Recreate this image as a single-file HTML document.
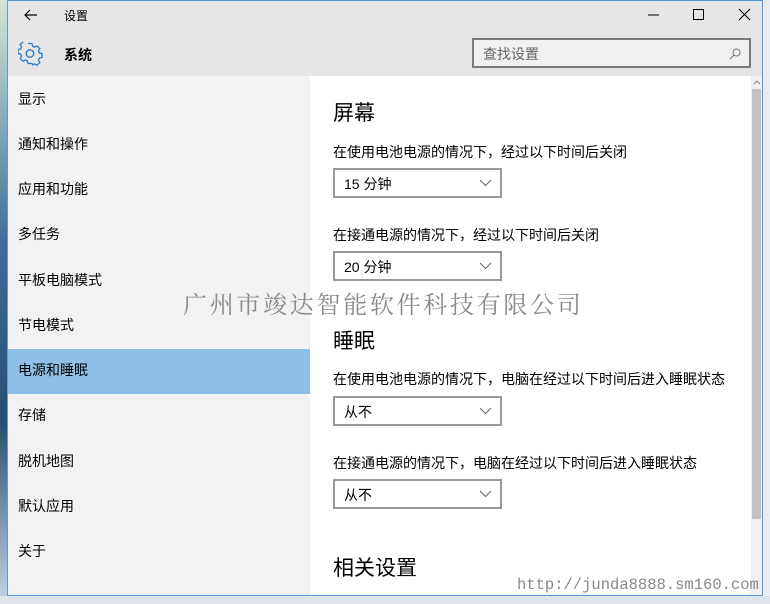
<!DOCTYPE html>
<html><head><meta charset="utf-8"><style>
*{margin:0;padding:0;box-sizing:border-box}
body{width:770px;height:604px;overflow:hidden;background:#e9edf2;font-family:"Liberation Sans","Noto Sans CJK SC",sans-serif;position:relative;color:#000}
.strip{position:absolute;left:0;top:0;width:8px;height:604px;background:linear-gradient(#d8e6d0,#3d6e9a 40%,#2b4d70 70%,#c9d4e0)}
.win{position:absolute;left:7px;top:0;width:756px;height:596px;border:1px solid #5a9ad6;background:#fff;overflow:hidden}
.title{position:absolute;left:0;top:0;width:756px;height:75px;background:#e6e6e6}
.t{position:absolute;font-size:12px}
.side{position:absolute;left:0;top:75px;width:302px;height:521px;background:#f2f2f2}
.item{position:absolute;left:10px;font-size:14px}
.sel{position:absolute;left:0;top:273px;width:302px;height:45px;background:#8fbfe6}
.c{position:absolute;font-size:14px}
.h{position:absolute;font-size:21px}
.dd{position:absolute;left:325px;width:169px;height:30px;border:2px solid #999;background:#fff;font-size:14px;padding:4px 0 0 9px}
.dd svg{position:absolute;right:8px;top:9px}
.search{position:absolute;left:464px;top:37px;width:279px;height:30px;border:2px solid #7a7a7a;background:#f0f0f0;font-size:14px;color:#666;padding:4px 0 0 9px}
.sb{position:absolute;left:743px;top:75px;width:11px;height:521px;background:#f0f0f0}
.thumb{position:absolute;left:744px;top:88px;width:9px;height:430px;background:#c2c2c2}
.wm{position:absolute;left:183px;top:285px;font-family:"Noto Serif CJK SC",serif;font-size:24px;color:#8a8a8a;letter-spacing:2.7px;white-space:nowrap}
.url{position:absolute;left:517px;top:576px;font-family:"Liberation Mono",monospace;font-size:15.5px;color:#888;white-space:nowrap}
.bot{position:absolute;left:0;top:596px;width:770px;height:8px;background:#dfe4ea}
</style></head><body>
<div class="strip"></div>
<div class="bot"></div>
<div class="win">
<div class="title">
<svg style="position:absolute;left:16px;top:7px" width="14" height="14" viewBox="0 0 14 14"><path d="M13 7H1M6 2L1 7l5 5" stroke="#000" stroke-width="1.2" fill="none"/></svg>
<div class="t" style="left:56px;top:6px">设置</div>
<svg style="position:absolute;left:10px;top:40px" width="25" height="25" viewBox="0 0 24 24"><path d="M10 2h4l.6 2.7 2 1 2.4-1.4 2.8 2.8-1.4 2.4 1 2 2.6.5v4l-2.6.6-1 2 1.4 2.4-2.8 2.8-2.4-1.4-2 1L14 22h-4l-.6-2.6-2-1-2.4 1.4-2.8-2.8 1.4-2.4-1-2L0 12v-4l2.6-.5 1-2L2.2 3.1 5 .3" transform="translate(0 .5) scale(.96)" fill="none" stroke="#2b7cd3" stroke-width="1.3"/><circle cx="11.5" cy="12" r="3.6" fill="none" stroke="#2b7cd3" stroke-width="1.3"/></svg>
<div class="t" style="left:56px;top:44px;font-size:14px;font-weight:bold">系统</div>
<svg style="position:absolute;left:640px;top:7px" width="110" height="14" viewBox="0 0 110 14"><path d="M0 7h11" stroke="#000"/><rect x="45.5" y="1.5" width="10" height="10" fill="none" stroke="#000"/><path d="M91 1l11 11M102 1L91 12" stroke="#000" stroke-width="1.1"/></svg>
<div class="search">查找设置<svg style="position:absolute;right:8px;top:8px" width="12" height="12" viewBox="0 0 12 12"><circle cx="7.5" cy="4.5" r="3.5" fill="none" stroke="#777"/><path d="M5 7L1 11" stroke="#777"/></svg></div>
</div>
<div class="side">
<div class="sel"></div>
<div class="item" style="top:13px">显示</div>
<div class="item" style="top:58px">通知和操作</div>
<div class="item" style="top:103px">应用和功能</div>
<div class="item" style="top:148px">多任务</div>
<div class="item" style="top:194px">平板电脑模式</div>
<div class="item" style="top:239px">节电模式</div>
<div class="item" style="top:284px">电源和睡眠</div>
<div class="item" style="top:329px">存储</div>
<div class="item" style="top:375px">脱机地图</div>
<div class="item" style="top:420px">默认应用</div>
<div class="item" style="top:465px">关于</div>
</div>
<div class="h" style="left:325px;top:96px">屏幕</div>
<div class="c" style="left:325px;top:141px">在使用电池电源的情况下，经过以下时间后关闭</div>
<div class="dd" style="top:167px">15 分钟<svg width="13" height="8" viewBox="0 0 13 8"><path d="M1 1l5.5 5.5L12 1" stroke="#666" fill="none"/></svg></div>
<div class="c" style="left:325px;top:224px">在接通电源的情况下，经过以下时间后关闭</div>
<div class="dd" style="top:250px">20 分钟<svg width="13" height="8" viewBox="0 0 13 8"><path d="M1 1l5.5 5.5L12 1" stroke="#666" fill="none"/></svg></div>
<div class="h" style="left:325px;top:324px">睡眠</div>
<div class="c" style="left:325px;top:368px">在使用电池电源的情况下，电脑在经过以下时间后进入睡眠状态</div>
<div class="dd" style="top:395px">从不<svg width="13" height="8" viewBox="0 0 13 8"><path d="M1 1l5.5 5.5L12 1" stroke="#666" fill="none"/></svg></div>
<div class="c" style="left:325px;top:452px">在接通电源的情况下，电脑在经过以下时间后进入睡眠状态</div>
<div class="dd" style="top:478px">从不<svg width="13" height="8" viewBox="0 0 13 8"><path d="M1 1l5.5 5.5L12 1" stroke="#666" fill="none"/></svg></div>
<div class="h" style="left:325px;top:551px">相关设置</div>
<div class="sb"></div><div class="thumb"></div>
<svg style="position:absolute;left:745px;top:79px" width="8" height="5" viewBox="0 0 8 5"><path d="M1 4l3-3 3 3" stroke="#888" fill="none"/></svg>
</div>
<div class="wm">广州市竣达智能软件科技有限公司</div>
<div class="url">http://junda8888.sm160.com</div>
</body></html>
